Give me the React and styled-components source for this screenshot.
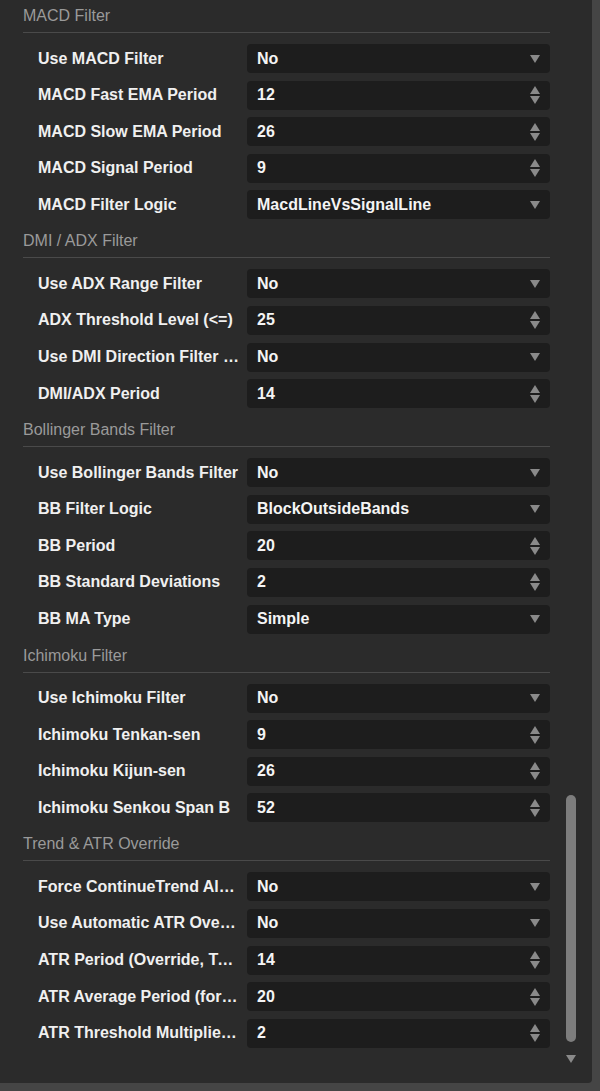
import React from "react";
import styled, { createGlobalStyle } from "styled-components";

const G = createGlobalStyle`
  html,body{margin:0;padding:0;background:#454545;}
  body{font-family:"Liberation Sans",Arial,sans-serif;}
`;
const Frame = styled.div`
  width:592px;height:1083px;background:#2b2b2b;border-radius:0 0 4px 0;
  position:relative;overflow:hidden;
`;
const Content = styled.div`
  width:527px;padding-left:23px;
`;
const Header = styled.div`
  height:33px;box-sizing:border-box;padding-top:7px;
  color:#9a9a9a;font-size:16px;line-height:18px;
  border-bottom:1px solid #4a4a4a;
`;
const Rows = styled.div`
  display:flex;flex-direction:column;gap:7.6px;padding:11px 0 6px 0;
`;
const Row = styled.div`
  display:flex;align-items:center;height:29px;
`;
const Label = styled.div`
  width:201px;margin-left:15px;margin-right:8px;color:#f0f0f0;font-size:16px;font-weight:bold;
  white-space:nowrap;overflow:hidden;text-overflow:ellipsis;
`;
const Box = styled.div`
  flex:1;height:29px;background:#1d1d1d;border-radius:4px;display:flex;align-items:center;
  padding:0 10px;box-sizing:border-box;color:#f4f4f4;font-size:16px;font-weight:bold;justify-content:space-between;
`;
const Arrows = styled.div`display:flex;flex-direction:column;gap:2px;`;
const Tri = ({up}) => (
  <svg width="10" height="8" viewBox="0 0 10 8"><path d={up?"M0 8L5 0L10 8Z":"M0 0L10 0L5 8Z"} fill="#8a8a8a"/></svg>
);
const ScrollTrack = styled.div`
  position:absolute;left:566px;top:795px;width:10px;height:247px;background:#7d7d7d;border-radius:5px;
`;
const ScrollDown = styled.div`position:absolute;left:566px;top:1049px;`;

const sections = [
  ["MACD Filter", [["Use MACD Filter","No","s"],["MACD Fast EMA Period","12","n"],["MACD Slow EMA Period","26","n"],["MACD Signal Period","9","n"],["MACD Filter Logic","MacdLineVsSignalLine","s"]]],
  ["DMI / ADX Filter", [["Use ADX Range Filter","No","s"],["ADX Threshold Level (<=)","25","n"],["Use DMI Direction Filter (+DI/-DI)","No","s"],["DMI/ADX Period","14","n"]]],
  ["Bollinger Bands Filter", [["Use Bollinger Bands Filter","No","s"],["BB Filter Logic","BlockOutsideBands","s"],["BB Period","20","n"],["BB Standard Deviations","2","n"],["BB MA Type","Simple","s"]]],
  ["Ichimoku Filter", [["Use Ichimoku Filter","No","s"],["Ichimoku Tenkan-sen","9","n"],["Ichimoku Kijun-sen","26","n"],["Ichimoku Senkou Span B","52","n"]]],
  ["Trend & ATR Override", [["Force ContinueTrend Always","No","s"],["Use Automatic ATR Override","No","s"],["ATR Period (Override, Trend)","14","n"],["ATR Average Period (for threshold)","20","n"],["ATR Threshold Multiplier (x)","2","n"]]],
];

export default function App(){
  return <>
    <G/>
    <Frame>
      <Content>
        {sections.map(([h,rows])=>(
          <div key={h}>
            <Header>{h}</Header>
            <Rows>
              {rows.map(([l,v,t])=>(
                <Row key={l}>
                  <Label>{l}</Label>
                  <Box>{v}{t==="s"?<Tri/>:<Arrows><Tri up/><Tri/></Arrows>}</Box>
                </Row>
              ))}
            </Rows>
          </div>
        ))}
      </Content>
      <ScrollTrack/>
      <ScrollDown><Tri/></ScrollDown>
    </Frame>
  </>;
}
